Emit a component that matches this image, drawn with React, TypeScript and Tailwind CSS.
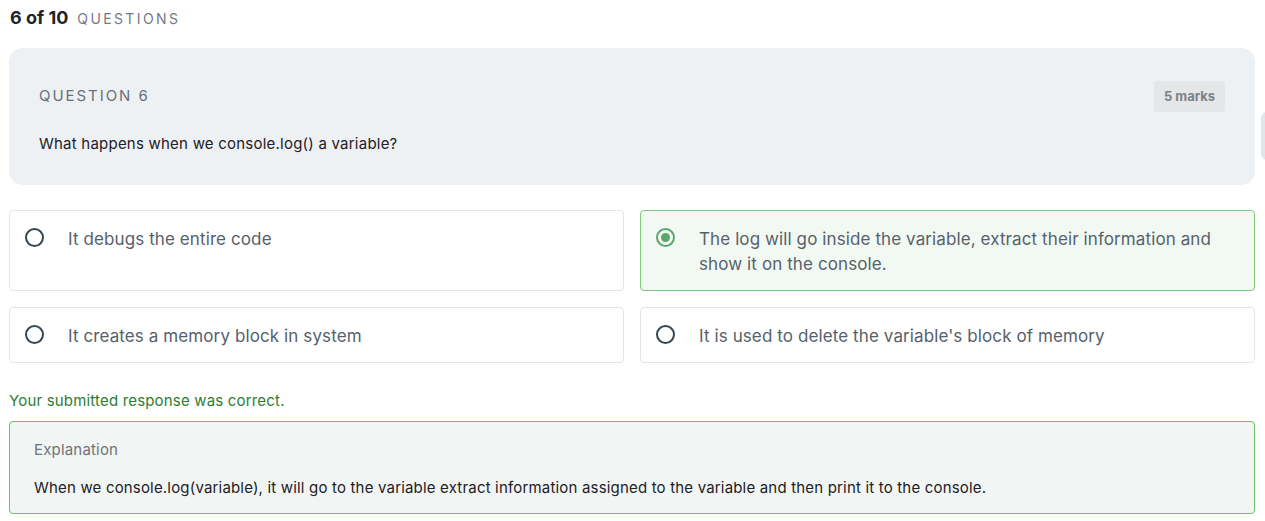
import React from "react";

const options = [
  { id: "a", text: "It debugs the entire code", selected: false },
  {
    id: "b",
    text: "The log will go inside the variable, extract their information and show it on the console.",
    selected: true,
  },
  { id: "c", text: "It creates a memory block in system", selected: false },
  { id: "d", text: "It is used to delete the variable's block of memory", selected: false },
];

function Radio({ checked }: { checked: boolean }) {
  if (checked) {
    return (
      <span className="mt-[1px] flex h-[19px] w-[19px] shrink-0 items-center justify-center rounded-full border-2 border-[#5aa66c]">
        <span className="h-[9px] w-[9px] rounded-full bg-[#5aa66c]" />
      </span>
    );
  }
  return <span className="mt-[1px] h-[19px] w-[19px] shrink-0 rounded-full border-2 border-[#37474f]" />;
}

export default function App() {
  return (
    <div className="relative min-h-[521px] overflow-hidden bg-white font-['Inter',sans-serif] px-[9px] pt-[4px]">
      {/* Header */}
      <div className="flex items-baseline gap-[9px] pl-[1px]">
        <span className="text-[18px] font-bold text-[#1f2329]">6 of 10</span>
        <span className="text-[14px] tracking-[0.17em] text-[#727b86]">QUESTIONS</span>
      </div>

      {/* Question card */}
      <div className="mt-[17px] w-[1246px] rounded-[14px] bg-[#eef1f4] px-[30px] pb-[29px] pt-[33px]">
        <div className="flex items-center justify-between">
          <span className="text-[15px] tracking-[0.13em] text-[#6b7078]">QUESTION 6</span>
          <span className="rounded-[3px] bg-[#e4e6e8] px-[10px] py-[7px] text-[13px] font-bold leading-[17px] text-[#7b8188]">
            5 marks
          </span>
        </div>
        <p className="mt-[21px] text-[15px] tracking-[0.015em] text-[#1d2024]">
          What happens when we console.log() a variable?
        </p>
      </div>

      {/* Options */}
      <div className="mt-[25px] grid w-[1246px] grid-cols-2 gap-x-[16px] gap-y-[16px]">
        {options.map((o) => (
          <div
            key={o.id}
            className={
              o.selected
                ? "flex gap-[24px] rounded-[4px] border border-[#80c97a] bg-[#f2f9f2] px-[15px] pb-[13px] pt-[16px]"
                : "flex gap-[24px] rounded-[4px] border border-[#e3e5e7] bg-white px-[15px] pb-[13px] pt-[16px]"
            }
          >
            <Radio checked={o.selected} />
            <span className="text-[17px] leading-[25px] tracking-[0.006em] text-[#56616c]">{o.text}</span>
          </div>
        ))}
      </div>

      <p className="mt-[27px] text-[15px] tracking-[0.012em] text-[#2e7d32]">Your submitted response was correct.</p>

      {/* Explanation */}
      <div className="mt-[9px] w-[1246px] rounded-[4px] border border-[#6cc066] bg-[#f1f6f5] px-[24px] pb-[14px] pt-[17px]">
        <p className="text-[15px] tracking-[0.012em] text-[#6f7378]">Explanation</p>
        <p className="mt-[15px] text-[15px] tracking-[0.012em] text-[#1d2024]">
          When we console.log(variable), it will go to the variable extract information assigned to the variable and then print it to the console.
        </p>
      </div>

      {/* side tab peeking from the right edge */}
      <div className="absolute right-[-16px] top-[112px] h-[48px] w-[20px] rounded-[6px] bg-[#dfe5ea]" />
    </div>
  );
}
